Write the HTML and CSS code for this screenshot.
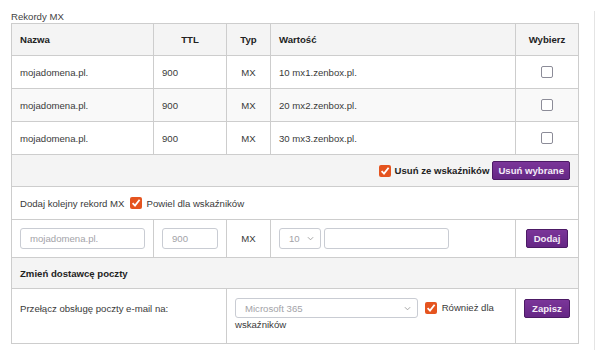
FILE: index.html
```html
<!DOCTYPE html>
<html lang="pl">
<head>
    <meta charset="UTF-8">
    <title>Rekordy MX</title>
    <link rel="stylesheet" href="styles.css">
</head>
<body>
    <div class="panel">
        <div class="caption">Rekordy MX</div>
        <table class="records">
            <colgroup>
                <col style="width: 142px">
                <col style="width: 73px">
                <col style="width: 44px">
                <col style="width: 245px">
                <col style="width: 63px">
            </colgroup>
            <tr class="head">
                <th class="left">Nazwa</th>
                <th>TTL</th>
                <th>Typ</th>
                <th class="left">Wartość</th>
                <th>Wybierz</th>
            </tr>
            <tr class="row">
                <td>mojadomena.pl.</td>
                <td>900</td>
                <td class="center">MX</td>
                <td>10 mx1.zenbox.pl.</td>
                <td class="center"><span class="box"></span></td>
            </tr>
            <tr class="row odd">
                <td>mojadomena.pl.</td>
                <td>900</td>
                <td class="center">MX</td>
                <td>20 mx2.zenbox.pl.</td>
                <td class="center"><span class="box"></span></td>
            </tr>
            <tr class="row">
                <td>mojadomena.pl.</td>
                <td>900</td>
                <td class="center">MX</td>
                <td>30 mx3.zenbox.pl.</td>
                <td class="center"><span class="box"></span></td>
            </tr>
            <tr class="actions">
                <td colspan="5">
                    <div class="actions-inner">
                        <span class="box on"><svg viewBox="0 0 12 12" width="12" height="12"><path d="M2.6 6.2 L5 8.6 L9.6 2.8" fill="none" stroke="#fff" stroke-width="1.8"/></svg></span>
                        <b>Usuń ze wskaźników</b>
                        <button class="btn">Usuń wybrane</button>
                    </div>
                </td>
            </tr>
            <tr class="row">
                <td colspan="5">
                    <div class="inline">
                        Dodaj kolejny rekord MX
                        <span class="box on"><svg viewBox="0 0 12 12" width="12" height="12"><path d="M2.6 6.2 L5 8.6 L9.6 2.8" fill="none" stroke="#fff" stroke-width="1.8"/></svg></span>
                        Powiel dla wskaźników
                    </div>
                </td>
            </tr>
            <tr class="add">
                <td><input class="field wide" type="text" placeholder="mojadomena.pl."></td>
                <td><input class="field small" type="text" placeholder="900"></td>
                <td class="center">MX</td>
                <td>
                    <div class="inline tight">
                        <span class="select prio">10 <svg viewBox="0 0 8 5" width="7" height="5"><path d="M1 1 L4 4 L7 1" fill="none" stroke="#999" stroke-width="1"/></svg></span>
                        <input class="field value" type="text">
                    </div>
                </td>
                <td class="center"><button class="btn">Dodaj</button></td>
            </tr>
            <tr class="head section">
                <th class="left" colspan="5">Zmień dostawcę poczty</th>
            </tr>
            <tr class="provider">
                <td colspan="2">Przełącz obsługę poczty e-mail na:</td>
                <td colspan="2" class="provider-cell">
                    <span class="select mail">Microsoft 365 <svg viewBox="0 0 8 5" width="7" height="5"><path d="M1 1 L4 4 L7 1" fill="none" stroke="#999" stroke-width="1"/></svg></span><span class="box on"><svg viewBox="0 0 12 12" width="12" height="12"><path d="M2.6 6.2 L5 8.6 L9.6 2.8" fill="none" stroke="#fff" stroke-width="1.8"/></svg></span>
                    Również dla wskaźników
                </td>
                <td class="center"><button class="btn">Zapisz</button></td>
            </tr>
        </table>
    </div>
</body>
</html>
```

FILE: styles.css
```css
/* General */
body {
    margin: 0;
    font-family: "Liberation Sans", Arial, sans-serif;
    font-size: 9.6px;
    color: #3a3a3a;
    background: #fff;
}

.panel {
    margin-top: 11px;
    width: 595px;
    height: 339px;
    box-sizing: border-box;
    border-right: 1px solid #e4e4e4;
    padding-left: 11px;
}

.caption {
    height: 12px;
    line-height: 11px;
    color: #444;
}

/* Table */
.records {
    border-collapse: collapse;
    table-layout: fixed;
    width: 567px;
}

.records th,
.records td {
    border: 1px solid #cdcdcd;
    padding: 0 8px;
    text-align: left;
    vertical-align: middle;
}

.records th {
    font-weight: bold;
    color: #222;
    text-align: center;
}

.records th.left {
    text-align: left;
}

.records .center {
    text-align: center;
}

.head th {
    background: #f4f4f4;
    height: 31px;
}

.head.section th {
    height: 30px;
}

.row td {
    height: 32px;
}

.row.odd td {
    background: #f9f9f9;
}

.actions td {
    background: #f4f4f4;
    height: 31px;
}

.actions-inner {
    display: flex;
    justify-content: flex-end;
    align-items: center;
    gap: 4px;
    color: #222;
}

.actions-inner .btn {
    margin-left: -1px;
    padding: 0 5px;
}

.inline {
    display: flex;
    align-items: center;
    gap: 5px;
}

.inline.tight {
    gap: 3px;
}

.add td {
    height: 37px;
}

/* Checkbox */
.box {
    display: inline-block;
    width: 10px;
    height: 10px;
    border: 1px solid #8c8c98;
    border-radius: 2px;
    background: #fff;
    vertical-align: middle;
}

.box.on {
    width: 12px;
    height: 12px;
    border: none;
    background: #e5541f;
}

.box svg {
    display: block;
}

/* Buttons */
.btn {
    font-family: inherit;
    font-size: 9.6px;
    font-weight: bold;
    color: #f4ecf7;
    background: linear-gradient(#7b3599, #652785);
    border: 1px solid #4c1a65;
    border-radius: 2px;
    height: 19px;
    padding: 0 7px;
    cursor: pointer;
}

/* Fields */
.field {
    font-family: inherit;
    font-size: 9.6px;
    color: #333;
    border: 1px solid #c9ccd3;
    border-radius: 3px;
    height: 21px;
    box-sizing: border-box;
    padding: 0 9px;
    background: #fff;
}

.field::placeholder {
    color: #a3a3a8;
}

.field.wide {
    width: 125px;
}

.field.small {
    width: 56px;
}

.field.value {
    width: 125px;
}

.select {
    display: inline-flex;
    align-items: center;
    justify-content: space-between;
    box-sizing: border-box;
    height: 21px;
    border: 1px solid #c9ccd3;
    border-radius: 3px;
    padding: 0 6px 0 9px;
    color: #a3a3a8;
    background: #fff;
}

.select.prio {
    width: 42px;
}

.select.mail {
    width: 183px;
    height: 20px;
    vertical-align: middle;
}

/* Provider row */
.provider td {
    vertical-align: top;
    padding-top: 9px;
    padding-bottom: 7px;
    height: 34px;
    line-height: 13px;
}

.provider td:first-child {
    padding-top: 13px;
}

.provider-cell .box {
    margin: 0 2px 0 7px;
}

.provider .btn {
    margin-top: 1px;
}
```
